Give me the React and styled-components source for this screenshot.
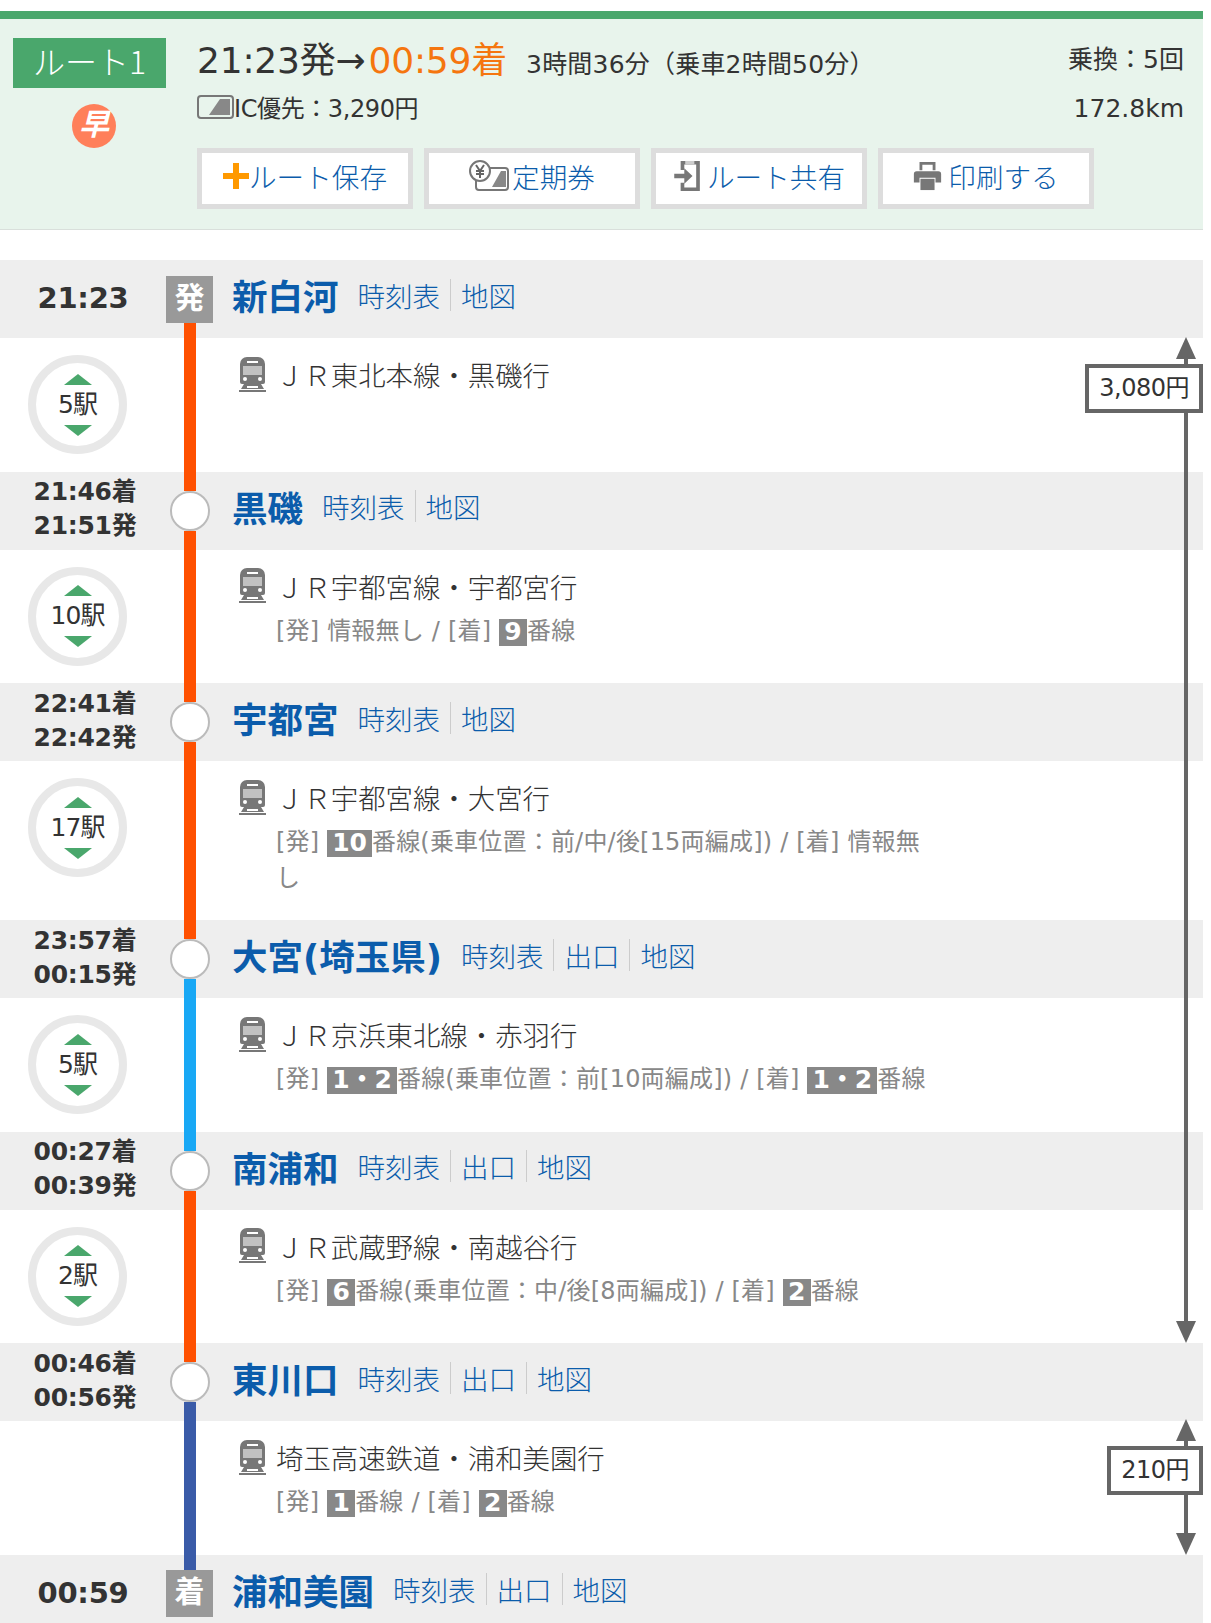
import React from "react";
import styled, { createGlobalStyle } from "styled-components";

const GlobalStyle = createGlobalStyle`
  html, body {
    margin: 0;
    padding: 0;
    background: #fff;
    height: 1623px;
    overflow: hidden;
  }
  body {
    font-family: "DejaVu Sans", "Noto Sans CJK JP", sans-serif;
    color: #333;
  }
  * { box-sizing: border-box; }
`;

const BLUE = "#0b5cab";
const GREEN = "#4aa76c";

const Page = styled.div`
  width: 1203px;
  padding-top: 11px;
`;

const RouteHeader = styled.header`
  display: flex;
  height: 219px;
  background: #e8f4ec;
  border-top: 8px solid ${GREEN};
  border-bottom: 1px solid #d9dfdb;
`;

const BadgeColumn = styled.div`
  width: 197px;
  padding: 19px 0 0 13px;
`;

const RouteBadge = styled.div`
  width: 153px;
  height: 50px;
  background: ${GREEN};
  color: #fff;
  font-size: 32px;
  line-height: 44px;
  text-align: center;
  font-family: "Noto Sans CJK JP", sans-serif;
  font-weight: 300;
`;

const FastBadge = styled.div`
  width: 44px;
  height: 44px;
  margin: 16px 0 0 59px;
  border-radius: 50%;
  background: #ff7f5a;
  color: #fff;
  font-size: 30px;
  font-weight: 700;
  font-style: italic;
  line-height: 42px;
  text-align: center;
`;

const Summary = styled.div`
  flex: 1;
  padding: 12px 19px 0 0;
`;

const SummaryRow = styled.div`
  display: flex;
  align-items: baseline;
  justify-content: space-between;
  height: ${(p) => p.$height}px;
`;

const Times = styled.div`
  display: flex;
  align-items: baseline;
`;

const Clock = styled.span`
  font-size: 36px;
  letter-spacing: -0.2px;
  margin-left: ${(p) => (p.$arrive ? 3 : 0)}px;
  color: ${(p) => (p.$arrive ? "#f5760f" : "#333")};
`;

const Duration = styled.span`
  margin-left: 19px;
  font-size: 25px;
  letter-spacing: 0.2px;
`;

const Fact = styled.span`
  align-self: flex-start;
  margin-top: ${(p) => p.$top}px;
  font-size: 25px;
  line-height: 36px;
`;

const Fare = styled.div`
  display: flex;
  align-items: center;
  font-size: 24px;
  letter-spacing: -0.4px;
`;

const ButtonRow = styled.div`
  display: flex;
  gap: 11px;
  margin-top: 15px;
`;

const ActionButton = styled.a`
  display: flex;
  align-items: center;
  justify-content: center;
  width: 216px;
  height: 61px;
  padding-bottom: 6px;
  border: 5px solid #ddd;
  background: #fff;
  color: ${BLUE};
  font-size: 27.6px;
  font-family: "Noto Sans CJK JP", sans-serif;
  font-weight: 300;
`;

const Timeline = styled.main`
  position: relative;
  margin-top: 30px;
`;

const StationRow = styled.section`
  display: grid;
  grid-template-columns: 166px 47px 1fr;
  height: 78px;
  background: #eee;
`;

const TimeBlock = styled.div`
  display: flex;
  flex-direction: column;
  justify-content: center;
  text-align: center;
  font-weight: 700;
  font-size: ${(p) => (p.$single ? 29 : 25)}px;
  line-height: ${(p) => (p.$single ? 38 : 34)}px;
  padding-left: ${(p) => (p.$single ? 0 : 4)}px;
  margin-top: ${(p) => (p.$single ? -2 : -3)}px;
  color: #333;
`;

const TimeLine = styled.span`
  letter-spacing: -0.3px;
`;

const NodeColumn = styled.div`
  display: flex;
  flex-direction: column;
  align-items: center;
`;

const Stub = styled.div`
  flex: 1;
  width: 12px;
  background: ${(p) => p.$color || "transparent"};
`;

const Circle = styled.div`
  width: 40px;
  height: 40px;
  border-radius: 50%;
  background: #fff;
  border: 2px solid #bbb;
`;

const EndTag = styled.div`
  width: 47px;
  height: 47px;
  background: #999;
  color: #fff;
  font-size: 30px;
  font-weight: 700;
  line-height: 43px;
  text-align: center;
`;

const StationInfo = styled.div`
  display: flex;
  align-items: center;
  padding: 0 0 9px 19px;
`;

const StationName = styled.span`
  color: ${BLUE};
  font-size: 35.5px;
  font-weight: 700;
  margin-right: 19px;
`;

const StationLink = styled.a`
  color: ${BLUE};
  font-size: 27.5px;
  line-height: 32px;
  padding: 0 10px;
  border-left: 1px solid #ccc;
  font-family: "Noto Sans CJK JP", sans-serif;
  font-weight: 300;

  &:first-of-type {
    border-left: none;
    padding-left: 0;
  }
`;

const Segment = styled.section`
  display: grid;
  grid-template-columns: 166px 47px 1fr;
  min-height: 133.5px;
`;

const StopsCell = styled.div`
  padding: 17px 0 0 28px;
`;

const StopsRing = styled.div`
  display: flex;
  flex-direction: column;
  align-items: center;
  justify-content: center;
  width: 99px;
  height: 99px;
  border-radius: 50%;
  border: 8px solid #e8e8e8;
  font-size: 25px;
  line-height: 40px;
  letter-spacing: -1px;
`;

const Triangle = styled.span`
  width: 0;
  height: 0;
  border-left: 14px solid transparent;
  border-right: 14px solid transparent;
  border-${(p) => (p.$down ? "top" : "bottom")}: 11px solid ${GREEN};
`;

const LineCell = styled.div`
  display: flex;
  justify-content: center;
`;

const LineBar = styled.div`
  width: 12px;
  background: ${(p) => p.$color};
`;

const SegmentInfo = styled.div`
  padding: 17px 0 24px 25px;
`;

const LineName = styled.div`
  display: flex;
  align-items: center;
  gap: 9px;
  height: 38px;
  font-size: 27.4px;
  font-family: "Noto Sans CJK JP", sans-serif;
  font-weight: 300;
`;

const Platform = styled.div`
  width: 656px;
  margin: 8px 0 0 38px;
  font-size: 24px;
  line-height: 36px;
  letter-spacing: 0.2px;
  color: #888;
`;

const Track = styled.b`
  display: inline-block;
  min-width: 28px;
  height: 27px;
  line-height: 26px;
  padding: 0 5px;
  background: #888;
  color: #fff;
  font-size: 25px;
  text-align: center;
  vertical-align: -1px;
  letter-spacing: 0;
`;

const FareSpan = styled.aside`
  position: absolute;
  right: 0;
  top: ${(p) => p.$top}px;
  height: ${(p) => p.$height}px;
  width: 120px;
`;

const FareLine = styled.svg`
  position: absolute;
  right: 7px;
  top: 0;
`;

const FareBox = styled.div`
  position: absolute;
  right: 0;
  top: ${(p) => p.$top}px;
  height: 49px;
  border: 4px solid #666;
  background: #fff;
  padding: 0 10px;
  font-size: 24px;
  line-height: 40px;
  letter-spacing: -0.5px;
  white-space: nowrap;
  color: #333;
`;

const Icon = styled.svg`
  flex: none;
  margin-right: ${(p) => p.$gap || 0}px;
`;

const ICCard = () => (
  <Icon width="37" height="24" viewBox="0 0 37 24">
    <rect x="1" y="1" width="35" height="22" rx="3" fill="none" stroke="#777" strokeWidth="2" />
    <path d="M12 20 L23 4 H33 V20 Z" fill="#888" />
  </Icon>
);

const Plus = () => (
  <Icon width="26" height="28" viewBox="0 0 26 28">
    <path d="M10 1h6v10h10v6H16v10h-6V17H0v-6h10z" fill="#f90" />
  </Icon>
);

const CommuterPass = () => (
  <Icon width="40" height="31" viewBox="0 0 40 31" $gap={3}>
    <rect x="7" y="8" width="32" height="22" rx="3" fill="#fff" stroke="#777" strokeWidth="2" />
    <path d="M23 27 L32 11 H37 V27 Z" fill="#888" />
    <circle cx="11" cy="11" r="10" fill="#fff" stroke="#777" strokeWidth="2" />
    <path d="M7 5l4 6 4-6M11 11v7M7 11h8M7 14h8" fill="none" stroke="#666" strokeWidth="2" />
  </Icon>
);

const Share = () => (
  <Icon width="29" height="32" viewBox="0 0 29 35" $gap={5}>
    <path d="M7 1h21v33H7v-9h4v5h13V5H11v6H7z" fill="#777" />
    <rect x="12" y="1" width="10" height="4" fill="#ccc" />
    <path d="M0 15h11V9l9 8.500-9 8.500v-6H0z" fill="#777" />
  </Icon>
);

const Printer = () => (
  <Icon width="29" height="31" viewBox="0 0 29 33" $gap={6}>
    <path d="M6 2h17v9h-3V5H9v6H6z" fill="#777" />
    <path d="M3 12h23a3 3 0 0 1 3 3v9h-6v-5H6v5H0v-9a3 3 0 0 1 3-3z" fill="#777" />
    <rect x="7" y="20" width="15" height="12" fill="#777" />
  </Icon>
);

const Train = () => (
  <Icon width="29" height="37" viewBox="0 0 29 37">
    <path d="M9 1h11a7 7 0 0 1 7 7v18a2 2 0 0 1-2 2H4a2 2 0 0 1-2-2V8a7 7 0 0 1 7-7z" fill="#777" />
    <rect x="9" y="5" width="11" height="2" fill="#fff" />
    <rect x="5" y="10" width="19" height="9" fill="#fff" opacity="0.55" />
    <circle cx="7" cy="23" r="2" fill="#fff" />
    <circle cx="22" cy="23" r="2" fill="#fff" />
    <path d="M6 28h17l3 5H3zM1 34h27v2H1z" fill="#777" />
    <path d="M9 30h11v2H9z" fill="#fff" />
  </Icon>
);

const Arrowed = ({ height }) => (
  <FareLine width="20" height={height} viewBox={`0 0 20 ${height}`}>
    <rect x="8" y="10" width="4" height={height - 20} fill="#666" />
    <path d="M10 0l10 22H0z" fill="#666" />
    <path d={`M10 ${height}l10-22H0z`} fill="#666" />
  </FareLine>
);

const route = [
  {
    times: ["21:23"], tag: "発", name: "新白河", links: ["時刻表", "地図"], after: "#ff5000",
    stops: "5駅", line: "ＪＲ東北本線・黒磯行",
  },
  {
    times: ["21:46着", "21:51発"], name: "黒磯", links: ["時刻表", "地図"], before: "#ff5000", after: "#ff5000",
    stops: "10駅", line: "ＪＲ宇都宮線・宇都宮行",
    platform: <>[発] 情報無し / [着] <Track>9</Track>番線</>,
  },
  {
    times: ["22:41着", "22:42発"], name: "宇都宮", links: ["時刻表", "地図"], before: "#ff5000", after: "#ff5000",
    stops: "17駅", line: "ＪＲ宇都宮線・大宮行",
    platform: <>[発] <Track>10</Track>番線(乗車位置：前/中/後[15両編成]) / [着] 情報無し</>,
  },
  {
    times: ["23:57着", "00:15発"], name: "大宮(埼玉県)", links: ["時刻表", "出口", "地図"], before: "#ff5000", after: "#18a8f5",
    stops: "5駅", line: "ＪＲ京浜東北線・赤羽行",
    platform: <>[発] <Track>1・2</Track>番線(乗車位置：前[10両編成]) / [着] <Track>1・2</Track>番線</>,
  },
  {
    times: ["00:27着", "00:39発"], name: "南浦和", links: ["時刻表", "出口", "地図"], before: "#18a8f5", after: "#ff5000",
    stops: "2駅", line: "ＪＲ武蔵野線・南越谷行",
    platform: <>[発] <Track>6</Track>番線(乗車位置：中/後[8両編成]) / [着] <Track>2</Track>番線</>,
  },
  {
    times: ["00:46着", "00:56発"], name: "東川口", links: ["時刻表", "出口", "地図"], before: "#ff5000", after: "#3a5ba8",
    line: "埼玉高速鉄道・浦和美園行",
    platform: <>[発] <Track>1</Track>番線 / [着] <Track>2</Track>番線</>,
  },
  {
    times: ["00:59"], tag: "着", name: "浦和美園", links: ["時刻表", "出口", "地図"], before: "#3a5ba8",
  },
];

const Station = ({ stop }) => (
  <StationRow>
    <TimeBlock $single={stop.times.length === 1}>
      {stop.times.map((t) => (
        <TimeLine key={t}>{t}</TimeLine>
      ))}
    </TimeBlock>
    <NodeColumn>
      <Stub $color={stop.before} />
      {stop.tag ? <EndTag>{stop.tag}</EndTag> : <Circle />}
      <Stub $color={stop.after} />
    </NodeColumn>
    <StationInfo>
      <StationName>{stop.name}</StationName>
      {stop.links.map((l) => (
        <StationLink key={l}>{l}</StationLink>
      ))}
    </StationInfo>
  </StationRow>
);

export default function App() {
  return (
    <Page>
      <GlobalStyle />
      <RouteHeader>
        <BadgeColumn>
          <RouteBadge>ルート1</RouteBadge>
          <FastBadge>早</FastBadge>
        </BadgeColumn>
        <Summary>
          <SummaryRow $height={58}>
            <Times>
              <Clock>21:23発→</Clock>
              <Clock $arrive>00:59着</Clock>
              <Duration>3時間36分（乗車2時間50分）</Duration>
            </Times>
            <Fact $top={11}>乗換：5回</Fact>
          </SummaryRow>
          <SummaryRow $height={44}>
            <Fare>
              <ICCard />
              IC優先：3,290円
            </Fare>
            <Fact $top={2}>172.8km</Fact>
          </SummaryRow>
          <ButtonRow>
            <ActionButton><Plus />ルート保存</ActionButton>
            <ActionButton><CommuterPass />定期券</ActionButton>
            <ActionButton><Share />ルート共有</ActionButton>
            <ActionButton><Printer />印刷する</ActionButton>
          </ButtonRow>
        </Summary>
      </RouteHeader>
      <Timeline>
        {route.map((stop) => (
          <React.Fragment key={stop.name}>
            <Station stop={stop} />
            {stop.line && (
              <Segment>
                <StopsCell>
                  {stop.stops && (
                    <StopsRing>
                      <Triangle />
                      {stop.stops}
                      <Triangle $down />
                    </StopsRing>
                  )}
                </StopsCell>
                <LineCell>
                  <LineBar $color={stop.after} />
                </LineCell>
                <SegmentInfo>
                  <LineName>
                    <Train />
                    {stop.line}
                  </LineName>
                  {stop.platform && <Platform>{stop.platform}</Platform>}
                </SegmentInfo>
              </Segment>
            )}
          </React.Fragment>
        ))}
        <FareSpan $top={77} $height={1006}>
          <Arrowed height={1006} />
          <FareBox $top={27}>3,080円</FareBox>
        </FareSpan>
        <FareSpan $top={1159} $height={136}>
          <Arrowed height={136} />
          <FareBox $top={27}>210円</FareBox>
        </FareSpan>
      </Timeline>
    </Page>
  );
}
